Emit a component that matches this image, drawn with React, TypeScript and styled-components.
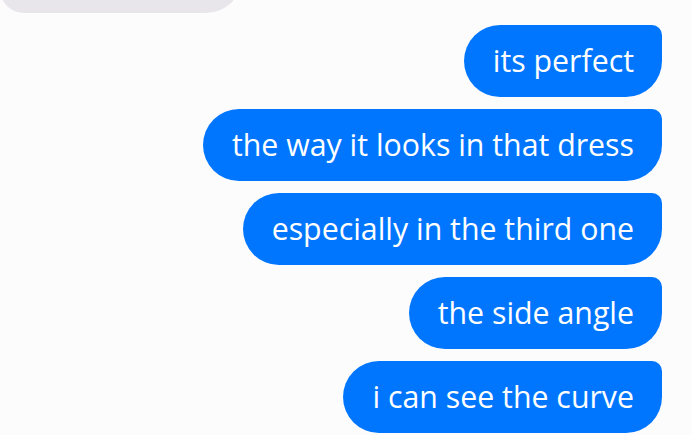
import React from "react";
import styled, { createGlobalStyle } from "styled-components";

const Global = createGlobalStyle`
  html, body { margin: 0; padding: 0; background: #fdfcfd; overflow: hidden; }
  body { font-family: "Open Sans", "Noto Sans", sans-serif; }
`;

const Thread = styled.div`
  display: flex;
  flex-direction: column;
  gap: 12px;
  padding: 0 30px 0 0;
  margin-top: -59px;
`;

const Row = styled.div<{ $mine?: boolean }>`
  display: flex;
  justify-content: ${(p) => (p.$mine ? "flex-end" : "flex-start")};
`;

const Bubble = styled.div<{ $mine?: boolean }>`
  box-sizing: border-box;
  height: 72px;
  display: flex;
  align-items: center;
  padding: 0 28px 2px 29px;
  font-size: 30.3px;
  color: ${(p) => (p.$mine ? "#ffffff" : "#1c1c1e")};
  background: ${(p) => (p.$mine ? "#0076ff" : "#e8e6eb")};
  border-radius: ${(p) => (p.$mine ? "36px 10px 36px 36px" : "10px 36px 36px 24px")};
  white-space: nowrap;
`;

const Ghost = styled(Bubble)`
  width: 242px;
`;

const messages = [
  "its perfect",
  "the way it looks in that dress",
  "especially in the third one",
  "the side angle",
  "i can see the curve",
];

export default function App() {
  return (
    <>
      <Global />
      <Thread>
        <Row>
          <Ghost />
        </Row>
        {messages.map((m) => (
          <Row key={m} $mine>
            <Bubble $mine>{m}</Bubble>
          </Row>
        ))}
      </Thread>
    </>
  );
}
